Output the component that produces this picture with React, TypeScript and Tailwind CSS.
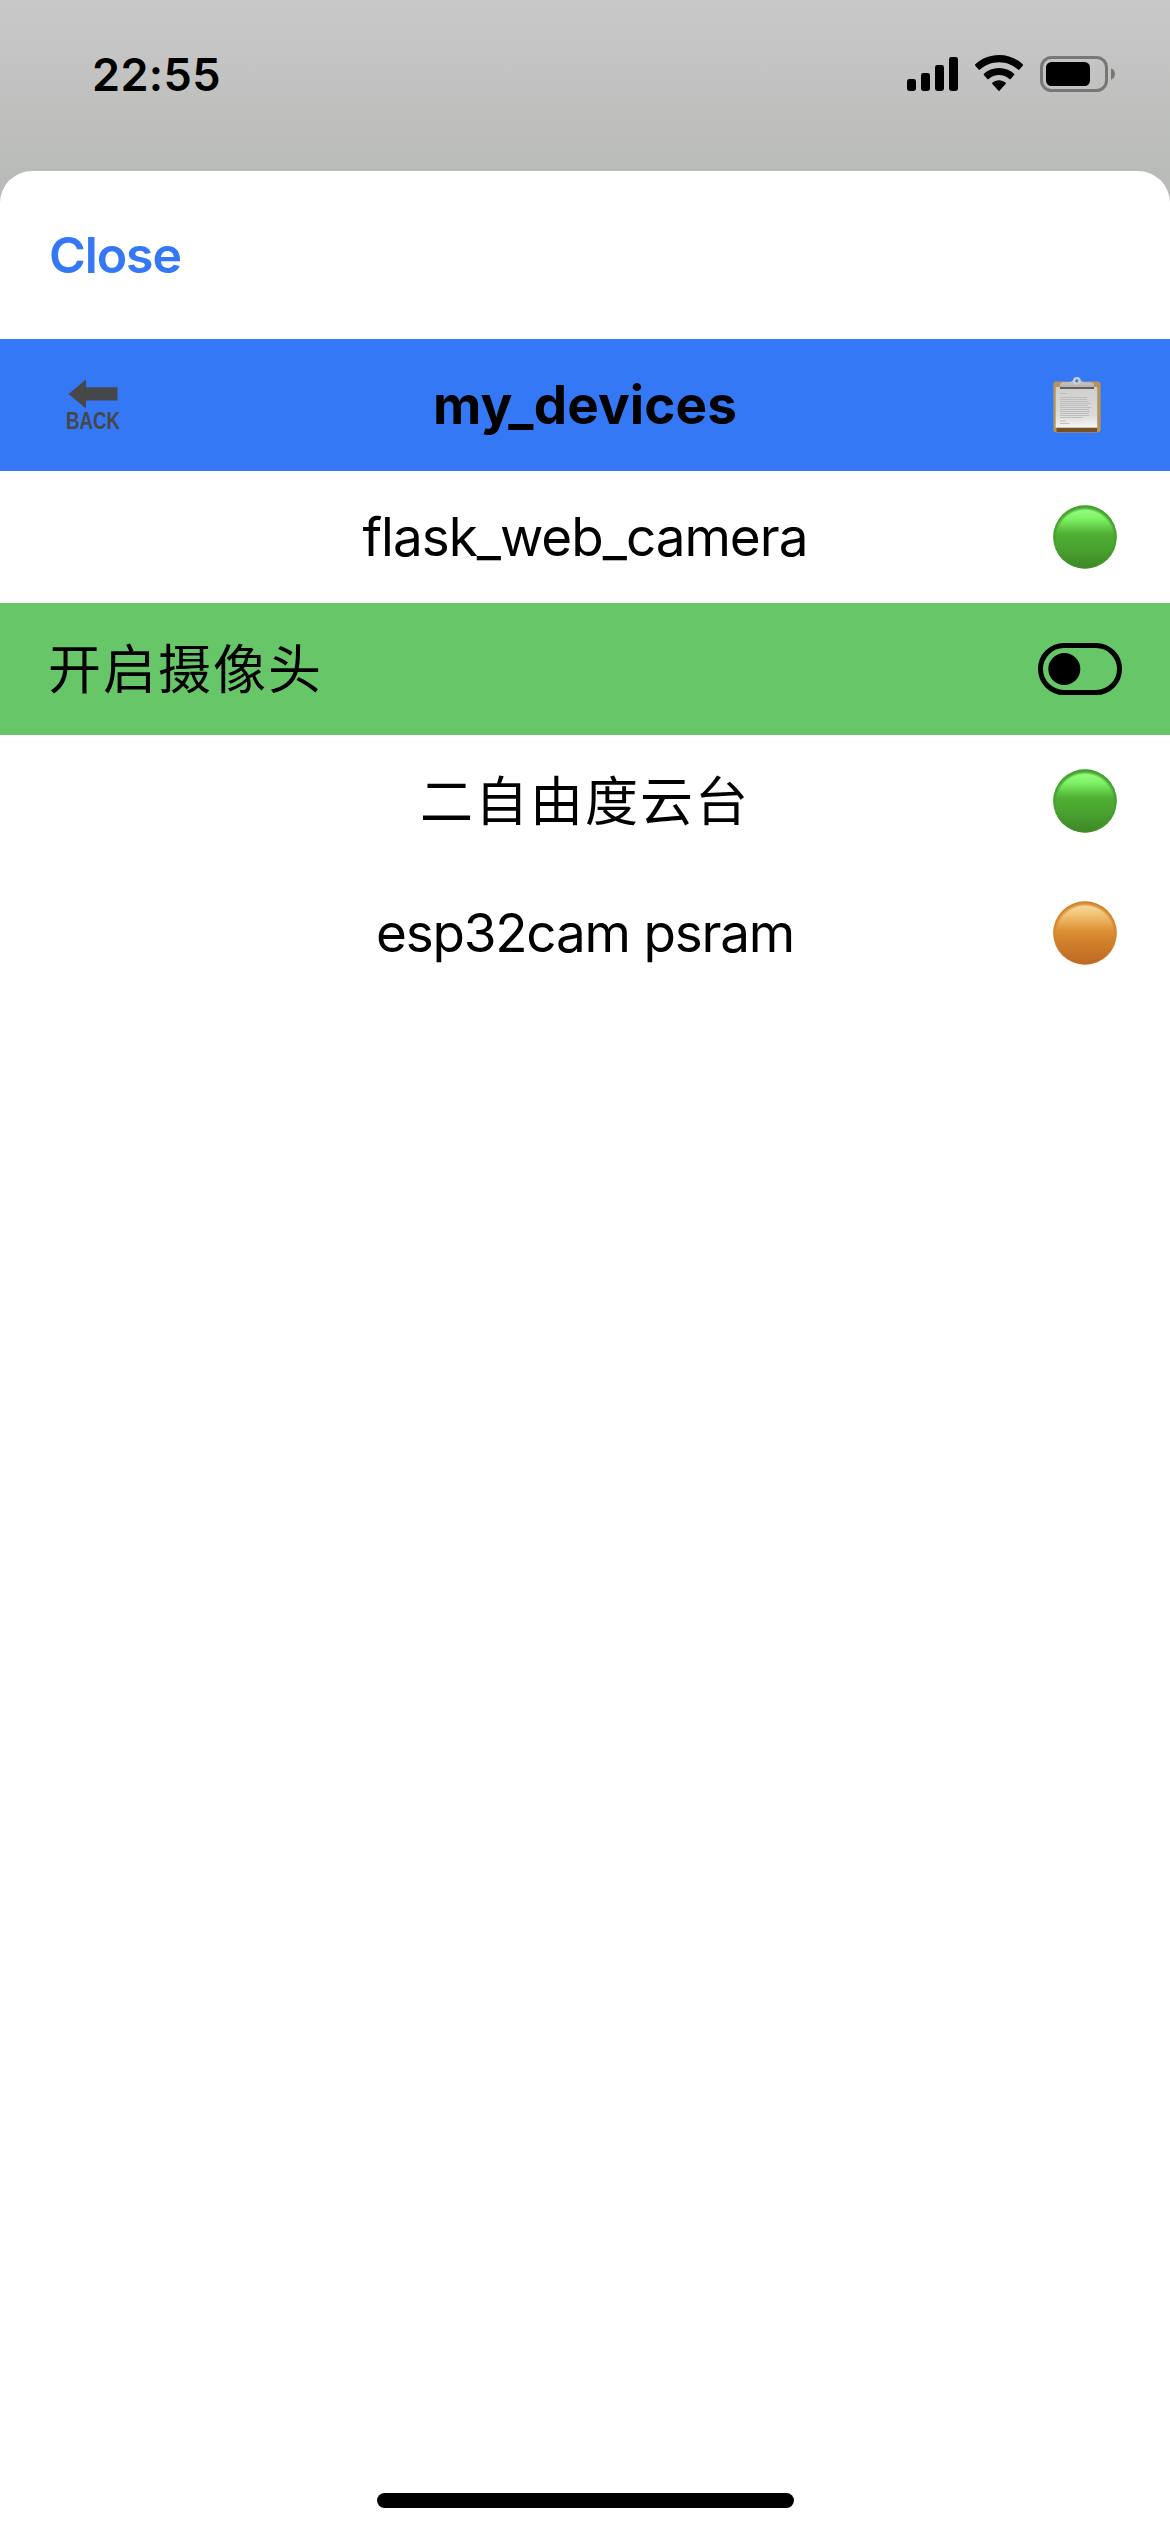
import React from "react";

const FONT = "font-['Inter','Noto_Sans_CJK_SC',sans-serif]";

function SignalIcon() {
  return (
    <svg width="51" height="34" viewBox="0 0 51 34" fill="#000">
      <rect x="0" y="22" width="9" height="12" rx="2.4" />
      <rect x="14" y="16" width="9" height="18" rx="2.4" />
      <rect x="28" y="8" width="9" height="26" rx="2.4" />
      <rect x="42" y="0" width="9" height="34" rx="2.4" />
    </svg>
  );
}

function WifiIcon() {
  return (
    <svg width="48" height="36" viewBox="0 0 48 36" fill="#000">
      <path d="M24 0C33.2 0 41.600 3.500 47.700 9.300C48.100 9.700 48.100 10.300 47.700 10.700L44.400 14.600C44 15 43.400 15 43 14.600C37.900 9.900 31.200 7.200 24 7.200C16.800 7.200 10.100 9.900 5 14.600C4.600 15 4 15 3.600 14.600L0.300 10.700C-0.100 10.300 -0.100 9.700 0.300 9.300C6.400 3.500 14.800 0 24 0Z" />
      <path d="M24 13C29.800 13 35.100 15.200 39.100 18.700C39.500 19.100 39.500 19.700 39.100 20.100L35.700 23.900C35.300 24.300 34.800 24.300 34.300 23.900C31.500 21.500 27.900 20.100 24 20.100C20.100 20.100 16.500 21.500 13.700 23.900C13.200 24.300 12.700 24.300 12.300 23.900L8.900 20.100C8.500 19.700 8.500 19.100 8.900 18.700C12.900 15.200 18.200 13 24 13Z" />
      <path d="M24 25.200C26.500 25.200 28.800 26.100 30.600 27.600C31 28 31 28.500 30.600 28.900L24.700 35.600C24.300 36 23.700 36 23.300 35.600L17.400 28.900C17 28.500 17 28 17.400 27.600C19.200 26.100 21.500 25.200 24 25.200Z" />
    </svg>
  );
}

function BatteryIcon() {
  return (
    <svg width="75" height="36" viewBox="0 0 75 36">
      <rect x="1.500" y="1.500" width="65" height="33" rx="10" fill="none" stroke="#777876" strokeWidth="3" />
      <rect x="6" y="6" width="44" height="24" rx="5.500" fill="#000" />
      <path d="M71 12.300C73.500 13.300 75 15.500 75 18C75 20.500 73.500 22.700 71 23.700Z" fill="#777876" />
    </svg>
  );
}

function BackIcon() {
  return (
    <svg width="72" height="62" viewBox="-4 0 72 62" fill="#464748">
      <path d="M2.500 20L20 5.500V13.200H51.500V26.500H20V34.500Z" />
      <text x="0" y="54.500" textLength="54" lengthAdjust="spacingAndGlyphs" fontFamily="Liberation Sans" fontWeight="700" fontSize="24">
        BACK
      </text>
    </svg>
  );
}

function ClipboardIcon() {
  return (
    <svg width="48" height="56" viewBox="0 0 48 56">
      <defs>
        <linearGradient id="paper" x1="0" y1="0" x2="0" y2="1">
          <stop offset="0" stopColor="#cfcfcf" />
          <stop offset="0.700" stopColor="#dcdcdc" />
          <stop offset="1" stopColor="#f6f6f6" />
        </linearGradient>
        <linearGradient id="clip" x1="0" y1="0" x2="0" y2="1">
          <stop offset="0" stopColor="#cdd3da" />
          <stop offset="1" stopColor="#b3b3b5" />
        </linearGradient>
      </defs>
      <rect x="0.300" y="4.500" width="47.400" height="51" rx="3" fill="#b5935a" />
      <rect x="3.500" y="50" width="40.500" height="5" fill="#79501f" />
      <rect x="2.700" y="10" width="41.500" height="40.700" fill="url(#paper)" />
      <g stroke="#b9b9b9" strokeWidth="0.900">
        <path d="M7 16.500H13.500M7 44H13M7 46.500H16.500" />
        <path d="M7 20.500H34.500M7 22.500H34M7 24.500H35.500M7 26.500H37M7 28.500H35M7 30.500H38M7 32.500H36M7 34.500H37M7 36.500H35.500M7 38.500H36M7 40.500H30" />
      </g>
      <rect x="7" y="9" width="34" height="3" fill="#6d5d52" />
      <path d="M7 10V8.500Q7 5.500 10 5.300H16Q19 5 20.300 3A3.800 3.800 0 0 1 27.300 3Q28.500 5 31.500 5.300H37.500Q41 5.500 41 8.500V10Z" fill="url(#clip)" />
      <circle cx="23.800" cy="3.800" r="3" fill="none" stroke="#c6d0df" strokeWidth="1.800" />
      <circle cx="23.800" cy="3.800" r="1.500" fill="#4f78c0" />
    </svg>
  );
}

function StatusDot({ tone }: { tone: "green" | "orange" }) {
  const id = React.useId();
  const green = tone === "green";
  return (
    <svg width="64" height="64" viewBox="0 0 64 64">
      <defs>
        <linearGradient id={id} x1="0" y1="0" x2="0" y2="1">
          <stop offset="0.050" stopColor={green ? "#98ff84" : "#f8dba0"} />
          <stop offset="0.200" stopColor={green ? "#80f468" : "#f2c676"} />
          <stop offset="0.460" stopColor={green ? "#4fae33" : "#dd9135"} />
          <stop offset="0.650" stopColor={green ? "#4aa42f" : "#d07f2b"} />
          <stop offset="1" stopColor={green ? "#3e8727" : "#bd6723"} />
        </linearGradient>
        <radialGradient id={id + "rim"} cx="0.500" cy="0.530" r="0.520">
          <stop offset="0.860" stopColor={green ? "#439c2c" : "#d3832b"} stopOpacity="0" />
          <stop offset="0.940" stopColor={green ? "#439c2c" : "#d3832b"} stopOpacity="0.850" />
          <stop offset="1" stopColor={green ? "#439c2c" : "#d3832b"} stopOpacity="1" />
        </radialGradient>
      </defs>
      <circle cx="32" cy="32" r="31.700" fill={`url(#${id})`} />
      <circle cx="32" cy="32" r="31.700" fill={`url(#${id}rim)`} />
    </svg>
  );
}

function ToggleOffIcon() {
  return (
    <svg width="84" height="52" viewBox="0 0 84 52">
      <rect x="2.500" y="2.500" width="79" height="47" rx="23.500" fill="none" stroke="#000" strokeWidth="5" />
      <circle cx="26.300" cy="26" r="16" />
    </svg>
  );
}

function DeviceRow({ name, tone, className }: { name: string; tone: "green" | "orange"; className: string }) {
  return (
    <div className="grid h-[132px] grid-cols-[1fr_auto_1fr] items-center px-[53px]">
      <span />
      <span className={`text-[53px] leading-[64px] whitespace-nowrap ${className}`}>{name}</span>
      <span className="flex justify-end">
        <StatusDot tone={tone} />
      </span>
    </div>
  );
}

export default function App() {
  return (
    <div className={`flex h-[2532px] w-[1170px] flex-col overflow-hidden bg-linear-to-b from-[#c8c8c8] to-[#b9bbb8] to-[180px] text-black ${FONT}`}>
      <header className="flex h-[171px] shrink-0 items-start justify-between pr-[55px] pl-[92px]">
        <time className="mt-[47px] text-[45px] leading-[56px] font-semibold tracking-[0.4px]">22:55</time>
        <div className="mt-[55px] flex items-start">
          <div className="mt-[2px] mr-[17px]"><SignalIcon /></div>
          <div className="mr-[17px]"><WifiIcon /></div>
          <div className="mt-px"><BatteryIcon /></div>
        </div>
      </header>
      <main className="flex flex-1 flex-col rounded-t-[32px] bg-white">
        <div className="flex h-[168px] items-center pl-[49px]">
          <button className="text-[50px] leading-[60px] font-semibold tracking-[-1.1px] text-[#3478f6]">Close</button>
        </div>
        <div className="grid h-[132px] grid-cols-[1fr_auto_1fr] items-center bg-[#3478f6] pr-[69px] pl-[62px]">
          <span className="flex"><BackIcon /></span>
          <h1 className="ml-[7px] text-[53px] leading-[64px] font-bold tracking-[0.1px]">my_devices</h1>
          <span className="flex justify-end"><ClipboardIcon /></span>
        </div>
        <DeviceRow name="flask_web_camera" tone="green" className="tracking-[-1px]" />
        <div className="flex h-[132px] items-center justify-between bg-[#67c667] pr-[48px] pl-[48px]">
          <span className="pt-[2px] text-[53px] leading-[64px] tracking-[2px]">开启摄像头</span>
          <ToggleOffIcon />
        </div>
        <DeviceRow name="二自由度云台" tone="green" className="pt-[2px] tracking-[2px]" />
        <DeviceRow name="esp32cam psram" tone="orange" className="tracking-[-1.2px]" />
        <div className="mx-auto mt-auto mb-[24px] h-[15px] w-[417px] rounded-full bg-black" />
      </main>
    </div>
  );
}
